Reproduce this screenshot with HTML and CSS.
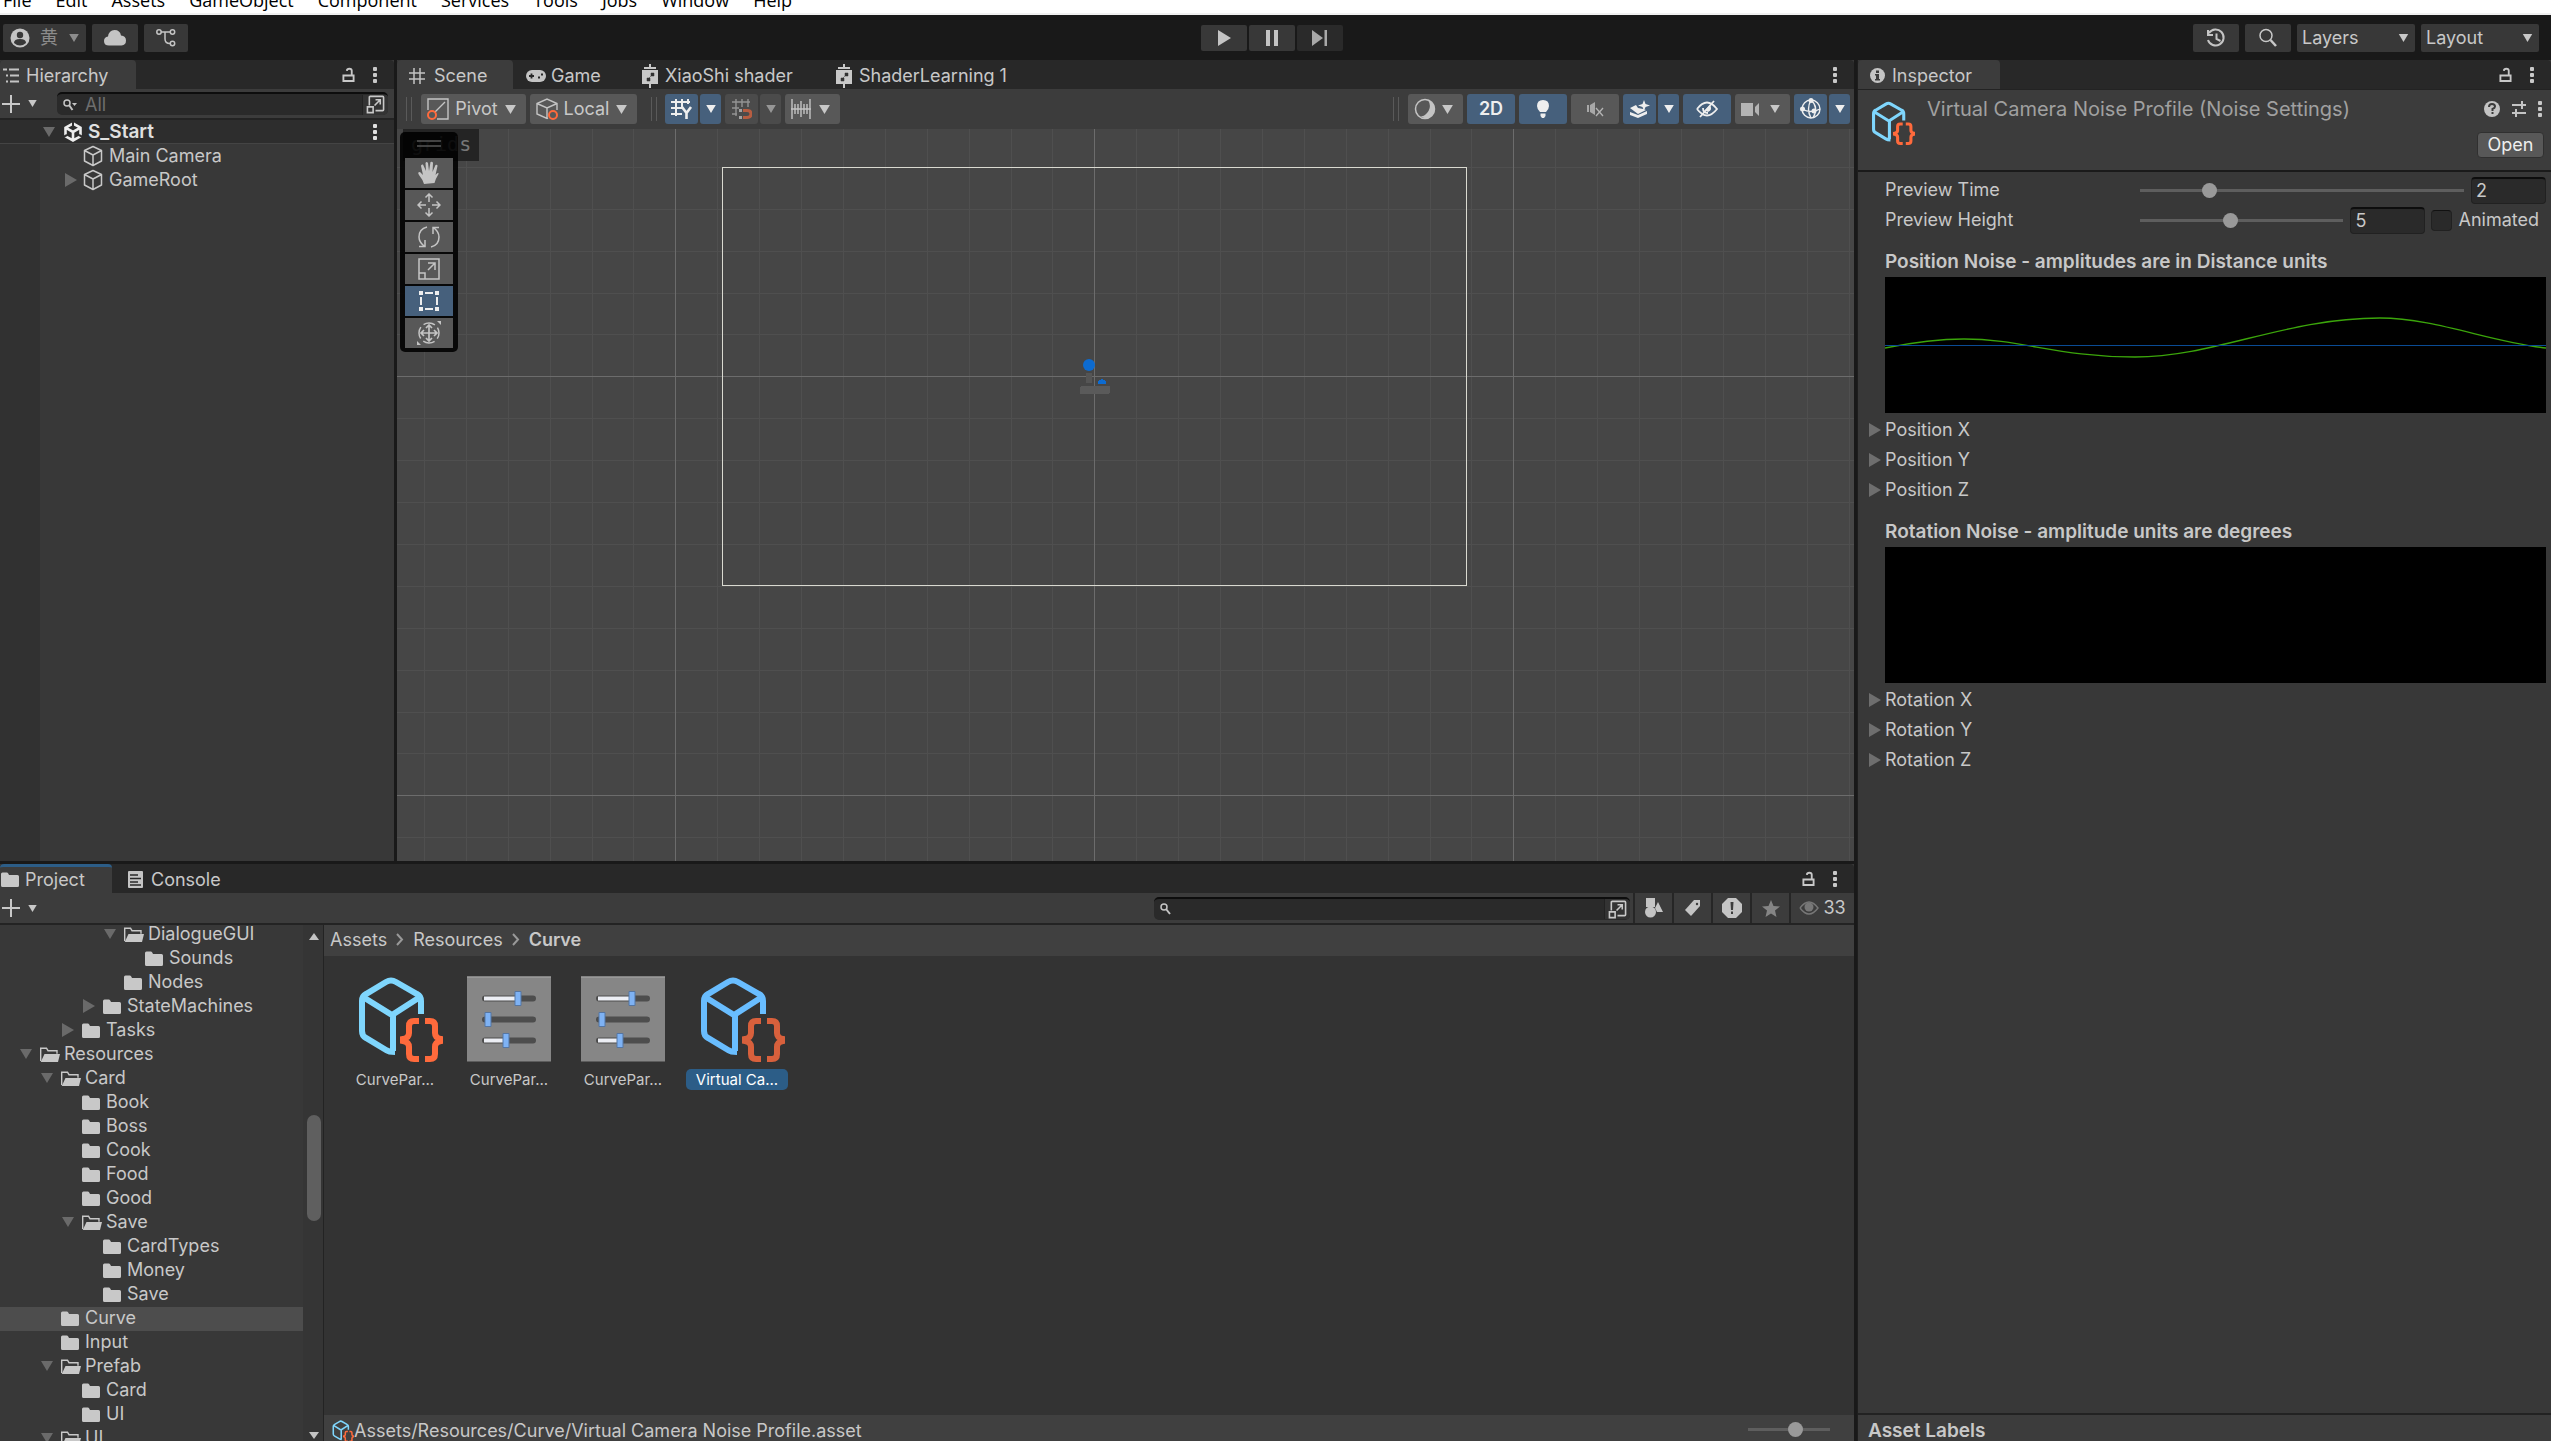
FILE: index.html
```html
<!DOCTYPE html>
<html lang="en">
<head>
<meta charset="utf-8">
<title>Scene Editor</title>
<link rel="stylesheet" href="styles.css">
</head>
<body>
<svg class="defs" aria-hidden="true">
  <symbol id="down" viewBox="0 0 14 10"><path d="M1 0h12L7 10z" fill="currentColor"/></symbol>
  <symbol id="right" viewBox="0 0 12 14"><path d="M0 0l12 7L0 14z" fill="currentColor"/></symbol>
  <symbol id="kebab" viewBox="0 0 4 16"><g fill="currentColor"><rect width="4" height="4" rx="1"/><rect y="6" width="4" height="4" rx="1"/><rect y="12" width="4" height="4" rx="1"/></g></symbol>
  <symbol id="lock" viewBox="0 0 14 16"><path d="M1.500 8.500h11v6h-11zM10.500 8V3.500C10.500 .6 5.500 .6 5.200 3.500" fill="none" stroke="currentColor" stroke-width="2"/></symbol>
  <symbol id="plus" viewBox="0 0 18 18"><path d="M9 0v18M0 9h18" stroke="currentColor" stroke-width="2"/></symbol>
  <symbol id="cube" viewBox="0 0 22 22"><path d="M11 1.500l8.500 4v10.500L11 20.500 2.500 16V5.500zM2.500 5.500L11 10l8.500-4.500M11 10v10.500" fill="none" stroke="currentColor" stroke-width="1.500" stroke-linejoin="round"/></symbol>
  <symbol id="folder" viewBox="0 0 20 16"><path d="M0 2q0-1.500 1.500-1.500H6q1 0 1.500 1.500l.5 1h8.500q1.500 0 1.500 1.500v9q0 1.500-1.500 1.500h-15Q0 15 0 13.500z" fill="currentColor"/></symbol>
  <symbol id="folder-open" viewBox="0 0 20 16"><path d="M.7 14V1.200H6.500l1.500 2.500h9v3" fill="none" stroke="currentColor" stroke-width="1.400"/><path d="M4.500 7H20l-2 8H.7z" fill="currentColor"/></symbol>
  <symbol id="popout" viewBox="0 0 20 20"><path d="M3.500 11V2.500q0-1 1-1h13q1 0 1 1v13q0 1-1 1H10M1.500 12.500h6v6h-6zM9 11l6-6M10 5h5v5" fill="none" stroke="currentColor" stroke-width="1.700"/></symbol>
  <symbol id="search" viewBox="0 0 20 20"><circle cx="8" cy="7.500" r="6" fill="none" stroke="currentColor" stroke-width="1.500"/><path d="M12.500 12l5.500 6" stroke="currentColor" stroke-width="2.500"/></symbol>
  <symbol id="handle" viewBox="0 0 8 24"><path d="M1.500 0v24M6.500 0v24" stroke="#5a5a5a"/></symbol>
  <symbol id="script" viewBox="0 0 16 24"><path d="M7 0h2v3h5v2H2V3h5zM0 6h16v14H9v4H7v-4H0z" fill="currentColor"/><path d="M6 15l5-5M9 9h3v3H9zM5 14h3v3H5z" fill="#333" stroke="#333" stroke-width=".5"/></symbol>
  <symbol id="asset" viewBox="0 0 86 86"><path d="M63 38V25q0-5-4-7L38 6q-5-3-10 0L8 18q-4 2-4 7v30q0 5 4 7l20 12q3 2 9 2M5 21l29 18 28-18M35 39v36" transform="translate(1 0)" fill="none" stroke="currentColor" stroke-width="6"/><path d="M62 45h-5q-5 0-5 5v7q0 5-6 6v2q6 1 6 6v7q0 5 5 5h5M68 45h5q5 0 5 5v7q0 5 6 6v2q-6 1-6 6v7q0 5-5 5h-5" fill="none" stroke="#ff6a3c" stroke-width="6" class="brace"/></symbol>
  <symbol id="preset" viewBox="0 0 84 85"><rect width="84" height="85" fill="#868686"/><path d="M0 .5h84" stroke="#aaa"/><path d="M18 22h48M18 43h48M18 64h48" stroke="#4d4d4d" stroke-width="6" stroke-linecap="round"/><path d="M17 22h32M17 64h20" stroke="#eceef4" stroke-width="4"/><path d="M48 15h6v14h-6zM18 36h6v14h-6zM36 57h6v14h-6z" fill="#7eb2f4" stroke="#5576a3"/></symbol>
</svg>

<nav class="menubar">
  <a href="#">File</a><a href="#">Edit</a><a href="#">Assets</a><a href="#">GameObject</a><a href="#">Component</a><a href="#">Services</a><a href="#">Tools</a><a href="#">Jobs</a><a href="#">Window</a><a href="#">Help</a>
</nav>

<header class="topbar">
  <div class="top-left">
    <button class="top-btn account"><svg width="20" height="20" viewBox="0 0 20 20"><circle cx="10" cy="10" r="9.500" fill="#c4c4c4"/><circle cx="10" cy="7" r="3.200" fill="#383838"/><path d="M4 15q0-4 6-4t6 4q-6 5-12 0" fill="#383838"/></svg><span>黄</span><svg width="12" height="8"><use href="#down"/></svg></button>
    <button class="top-btn cloud" aria-label="Cloud"><svg width="22" height="16" viewBox="0 0 22 16"><path d="M5 15.500q-5 0-5-4.500 0-4 4-4.500Q5 0 10.500 0 16 0 17 5.500q5 .5 5 5t-4.500 5z" fill="#c4c4c4"/></svg></button>
    <button class="top-btn vcs" aria-label="Version control"><svg width="20" height="18" viewBox="0 0 20 18"><g fill="none" stroke="#c4c4c4" stroke-width="1.500"><circle cx="3" cy="3" r="2.200"/><circle cx="16.500" cy="3" r="2.200"/><circle cx="16.500" cy="14.500" r="2.200"/><path d="M5 3h9M9 3v7q0 4.500 5 4.500"/></g></svg></button>
  </div>
  <div class="play">
    <button class="top-btn" aria-label="Play"><svg width="13" height="16" viewBox="0 0 13 16"><path d="M0 0l13 8-13 8z" fill="#c4c4c4"/></svg></button>
    <button class="top-btn" aria-label="Pause"><svg width="12" height="16" viewBox="0 0 12 16"><path d="M0 0h4v16H0zM8 0h4v16H8z" fill="#c4c4c4"/></svg></button>
    <button class="top-btn dim" aria-label="Step"><svg width="16" height="16" viewBox="0 0 16 16"><path d="M0 0l11 8-11 8zM12.500 0H15v16h-2.500z" fill="#a8a8a8"/></svg></button>
  </div>
  <div class="top-right">
    <button class="top-btn" aria-label="History"><svg width="20" height="20" viewBox="0 0 20 20"><path d="M3 5a8 8 0 1 1-1 7M2 2v5h5M10.500 5.500V11l4 2" fill="none" stroke="#c4c4c4" stroke-width="2"/></svg></button>
    <button class="top-btn" aria-label="Search"><svg width="20" height="20"><use href="#search"/></svg></button>
    <div class="pick"><select aria-label="Layers"><option>Layers</option></select><svg width="11" height="8"><use href="#down"/></svg></div>
    <div class="pick"><select aria-label="Layout"><option>Layout</option></select><svg width="11" height="8"><use href="#down"/></svg></div>
  </div>
</header>

<main class="workspace">
  <div class="left">
    <div class="upper">
      <section class="panel hierarchy">
        <div class="tabs">
          <button class="tab on"><svg width="16" height="16" viewBox="0 0 16 16"><path d="M0 1.500h4M6 1.500h10M3 7.500h2M7 7.500h9M3 13.500h2M7 13.500h9" stroke="#c4c4c4" stroke-width="1.800"/></svg>Hierarchy</button>
          <span class="tab-tools"><svg width="13" height="16"><use href="#lock"/></svg><svg width="4" height="16"><use href="#kebab"/></svg></span>
        </div>
        <div class="bar">
          <button class="add" aria-label="Create"><svg width="18" height="18"><use href="#plus"/></svg><svg width="11" height="7"><use href="#down"/></svg></button>
          <div class="find"><svg width="14" height="12" viewBox="0 0 14 12"><circle cx="4" cy="4" r="3" fill="none" stroke="#c4c4c4" stroke-width="1.500"/><path d="M6 6l3.500 5" stroke="#c4c4c4" stroke-width="2"/><path d="M9 4h5l-2.500 3z" fill="#c4c4c4"/></svg><input type="text" placeholder="All" aria-label="Search hierarchy"><button aria-label="Open search"><svg width="19" height="19"><use href="#popout"/></svg></button></div>
        </div>
        <ul class="objects">
          <li class="scene-row"><svg class="tri" width="14" height="12"><use href="#down"/></svg><svg width="20" height="20" viewBox="0 0 20 20"><path d="M10 1.500l7.500 4.200v8.600L10 18.500l-7.500-4.200V5.700zM2.500 5.700L10 10l7.500-4.300M10 10v8.500" fill="none" stroke="#eee" stroke-width="2.600"/><path d="M10 0v5M0 15l4-2M20 15l-4-2" stroke="#2d2d2d" stroke-width="2"/></svg><b>S_Start</b><svg class="end" width="4" height="16"><use href="#kebab"/></svg></li>
          <li class="obj"><svg class="tri off" width="12" height="14"><use href="#right"/></svg><svg width="22" height="22"><use href="#cube"/></svg>Main Camera</li>
          <li class="obj"><svg class="tri" width="12" height="14"><use href="#right"/></svg><svg width="22" height="22"><use href="#cube"/></svg>GameRoot</li>
        </ul>
      </section>

      <section class="panel scene">
        <div class="tabs">
          <button class="tab on t-scene"><svg width="16" height="16" viewBox="0 0 16 16"><path d="M5 0v16M11 0v16M0 5h16M0 11h16" stroke="#c4c4c4" stroke-width="1.500"/></svg>Scene</button>
          <button class="tab t-game"><svg width="20" height="12" viewBox="0 0 20 12"><rect width="20" height="12" rx="6" fill="#c4c4c4"/><path d="M3 6h5M5.500 3.500v5M12 7.500h2M15 4.500h2" stroke="#282828" stroke-width="1.800"/></svg>Game</button>
          <button class="tab t-shader"><svg width="16" height="24"><use href="#script"/></svg>XiaoShi shader</button>
          <button class="tab t-shader"><svg width="16" height="24"><use href="#script"/></svg>ShaderLearning 1</button>
          <span class="tab-tools"><svg width="4" height="16"><use href="#kebab"/></svg></span>
        </div>
        <div class="scene-bar">
          <svg class="grip" width="8" height="24"><use href="#handle"/></svg>
          <button class="tool w105"><svg width="22" height="22" viewBox="0 0 22 22"><path d="M1 12V1h20v20H10M8 14L18 4" fill="none" stroke="#c4c4c4" stroke-width="1.400"/><circle cx="5" cy="17" r="4" fill="none" stroke="#ff6a3c" stroke-width="2"/></svg>Pivot<svg width="13" height="9"><use href="#down"/></svg></button>
          <button class="tool w107"><svg width="22" height="22" viewBox="0 0 22 22"><path d="M12 20l-1 .5L1 16V5.500L11 1l10 4.500V12M1 5.500L11 10l10-4.500M11 10v10" fill="none" stroke="#c4c4c4" stroke-width="1.400"/><circle cx="17" cy="17" r="4" fill="none" stroke="#ff6a3c" stroke-width="2"/></svg>Local<svg width="13" height="9"><use href="#down"/></svg></button>
          <svg class="grip mid" width="8" height="24"><use href="#handle"/></svg>
          <div class="pair">
            <button class="tool blue w33" aria-label="Grid"><svg width="22" height="22" viewBox="0 0 22 22"><path d="M5 1v17M11 1v10M17 1v5M0 4h19M0 10h11M0 16h11" stroke="#eee" stroke-width="2" fill="none"/><path d="M11 9l4.500 6v6M20 9l-4.500 6" stroke="#eee" stroke-width="2.600" fill="none"/></svg></button>
            <button class="tool blue w21" aria-label="Grid options"><svg width="12" height="8"><use href="#down"/></svg></button>
          </div>
          <div class="pair faint">
            <button class="tool w33" aria-label="Snap"><svg width="20" height="20" viewBox="0 0 20 20"><path d="M4 0v17M10 0v8M16 0v8M0 3h18M0 9h7M0 15h5" stroke="#c4c4c4" stroke-width="1.400"/><path d="M11 11.500h4q4 0 4 3.500t-4 3.500h-4" fill="none" stroke="#ff6a3c" stroke-width="3"/><path d="M7 10h3v3H7zM7 17h3v3H7z" fill="#ddd"/></svg></button>
            <button class="tool w21" aria-label="Snap options"><svg width="12" height="8"><use href="#down"/></svg></button>
          </div>
          <button class="tool w55" aria-label="Increment"><svg width="20" height="20" viewBox="0 0 20 20"><path d="M1 0v20M19 0v20M0 10h20M4 5v10M7 5v10M10 2v16M13 5v10M16 5v10" stroke="#c4c4c4" stroke-width="1.400"/></svg><svg width="13" height="9"><use href="#down"/></svg></button>
          <span class="fill"></span>
          <svg class="grip right" width="8" height="24"><use href="#handle"/></svg>
          <button class="tool w55" aria-label="Draw mode"><svg width="22" height="22" viewBox="0 0 22 22"><circle cx="11" cy="11" r="9.500" fill="none" stroke="#c4c4c4" stroke-width="1.500"/><path d="M14 2q5 8-3 15-3 2-5 1 9 6 14-3 3-9-6-13" fill="#c4c4c4"/></svg><svg width="13" height="9"><use href="#down"/></svg></button>
          <button class="tool blue w48"><b>2D</b></button>
          <button class="tool blue w48" aria-label="Lighting"><svg width="12" height="18" viewBox="0 0 12 18"><path d="M3 12Q0 9 0 6q0-6 6-6t6 6q0 3-3 6zM3.500 13.500h5V16L7 18H5l-1.500-2z" fill="#eee"/></svg></button>
          <button class="tool w48" aria-label="Audio"><svg width="18" height="16" viewBox="0 0 18 16"><path d="M1 4h2v7H1zM4 4l5-3v13l-5-3z" fill="#a8a8a8"/><path d="M10 7l7 8M17 7l-7 8" stroke="#b4b4b4" stroke-width="1.300"/></svg></button>
          <div class="pair">
            <button class="tool blue w33" aria-label="Effects"><svg width="20" height="18" viewBox="0 0 20 18"><path d="M0 8l6-3 2 3 5 1 3 1-8 4zM0 12l8 3 9-4v3l-9 4-8-3zM14 0l1.500 4L20 5.500 15.500 7 14 11l-1.500-4L8 5.500 12.500 4z" fill="#eee"/></svg></button>
            <button class="tool blue w21" aria-label="Effect options"><svg width="12" height="8"><use href="#down"/></svg></button>
          </div>
          <button class="tool blue w48" aria-label="Visibility"><svg width="22" height="18" viewBox="0 0 22 18"><path d="M1 9q10-13 20 0-10 13-20 0M7 8q0 5 5 5M4 17L18 1" fill="none" stroke="#eee" stroke-width="1.800"/><path d="M9 10l5-5q3 5-2 7z" fill="#eee"/></svg></button>
          <button class="tool w55" aria-label="Camera"><svg width="19" height="13" viewBox="0 0 19 13"><path d="M0 0h12v13H0zM14 4l4-4v13l-4-4z" fill="#b4b4b4"/></svg><svg width="12" height="8"><use href="#down"/></svg></button>
          <div class="pair">
            <button class="tool blue w33" aria-label="Gizmos"><svg width="22" height="22" viewBox="0 0 22 22"><g fill="none" stroke="#eee" stroke-width="1.400"><circle cx="11" cy="11" r="9"/><path d="M11 2q-5 9 0 18M11 2q8 7 2 18M2 11q9 5 18 0"/></g><g fill="#eee"><circle cx="11" cy="2.500" r="2.500"/><circle cx="2.500" cy="11" r="2.500"/><circle cx="14" cy="13" r="2.500"/></g></svg></button>
            <button class="tool blue w21" aria-label="Gizmo options"><svg width="12" height="8"><use href="#down"/></svg></button>
          </div>
        </div>
        <div class="canvas">
          <svg class="grid" width="100%" height="100%">
            <defs><pattern id="cells" x="278" y="247" width="419" height="419" patternUnits="userSpaceOnUse">
              <path d="M42.500 0v419M84.500 0v419M126.500 0v419M168.500 0v419M210.500 0v419M252.500 0v419M294.500 0v419M336.500 0v419M377.500 0v419M0 42.500h419M0 84.500h419M0 126.500h419M0 168.500h419M0 210.500h419M0 252.500h419M0 294.500h419M0 336.500h419M0 377.500h419" stroke="#4f4f4f"/>
              <path d="M.5 0v419M0 .5h419" stroke="#6c6c6c"/>
            </pattern></defs>
            <rect width="100%" height="100%" fill="url(#cells)"/>
            <rect x="325.500" y="38.500" width="744" height="418" fill="none" stroke="#d9d9d0"/>
            <rect x="689" y="244" width="6" height="10" fill="#555"/>
            <rect x="683" y="257" width="30" height="8" rx="2" fill="#5a5a5a"/>
            <circle cx="692" cy="236" r="6" fill="#0d6bd0"/>
            <path d="M701 255v-2q4-6 8 0v2z" fill="#0d6bd0"/>
          </svg>
          <span class="hint">grids</span>
          <div class="overlay">
            <svg class="drag" width="24" height="7" viewBox="0 0 24 7"><path d="M0 1h24M0 6h24" stroke="#555" stroke-width="1.500"/></svg>
            <button aria-label="View"><svg width="22" height="24" viewBox="0 0 22 24"><path d="M6 23q-1-4-5-9-2-3 1-3l3 3L3 5q0-2 2-1.500L8 10 7.500 2q1-2 2.500 0l1 8 1.500-9q2-1 2.500 1l-.5 9 3-7q2-1 2 1l-2 9 2-2q2 0 1 1-3 5-4 9z" fill="#c4c4c4"/></svg></button>
            <button aria-label="Move"><svg width="24" height="24" viewBox="0 0 24 24"><path d="M12 1v8M12 15v8M1 12h8M15 12h8M8.500 4.500L12 1l3.500 3.500M8.500 19.500L12 23l3.500-3.500M4.500 8.500L1 12l3.500 3.500M19.500 8.500L23 12l-3.500 3.500" fill="none" stroke="#c4c4c4" stroke-width="1.500"/></svg></button>
            <button aria-label="Rotate"><svg width="22" height="22" viewBox="0 0 22 22"><path d="M9 1Q1 3 1 11q0 5 5 9M1 20.500h6V14M13 21q8-2 8-10 0-5-5-9M21 1.500h-6V8" fill="none" stroke="#c4c4c4" stroke-width="1.500"/></svg></button>
            <button aria-label="Scale"><svg width="22" height="22" viewBox="0 0 22 22"><path d="M1 1h20v20H1zM1 15h6v6M10 12l7-7M10 5h7v7" fill="none" stroke="#c4c4c4" stroke-width="1.500"/></svg></button>
            <button class="blue" aria-label="Rect"><svg width="20" height="20" viewBox="0 0 20 20"><path d="M0 0h4v4H0zM16 0h4v4h-4zM0 16h4v4H0zM16 16h4v4h-4zM6 1h8v2H6zM6 17h8v2H6zM1 6h2v8H1zM17 6h2v8h-2z" fill="#eee"/></svg></button>
            <button aria-label="Transform"><svg width="24" height="24" viewBox="0 0 24 24"><circle cx="12" cy="12" r="10" fill="none" stroke="#c4c4c4" stroke-width="1.500" stroke-dasharray="12 3.700" stroke-dashoffset="6"/><path d="M12 4v16M4 12h16M9 7l3-3 3 3M9 17l3 3 3-3M7 9l-3 3 3 3M17 9l3 3-3 3" fill="none" stroke="#c4c4c4" stroke-width="1.700"/><path d="M20 0h4v4zM0 20v4h4z" fill="#c4c4c4"/></svg></button>
          </div>
        </div>
      </section>
    </div>

    <section class="panel project">
      <div class="tabs">
        <button class="tab on focus"><svg width="20" height="16"><use href="#folder"/></svg>Project</button>
        <button class="tab t-console"><svg width="16" height="17" viewBox="0 0 16 17"><path d="M0 1q0-1 1-1h13q1 0 1 1v15q0 1-1 1H1q-1 0-1-1z" fill="#c4c4c4"/><path d="M2 4h8M2 7.500h11M2 11h8M2 14h11" stroke="#282828" stroke-width="1.500"/></svg>Console</button>
        <span class="tab-tools"><svg width="13" height="16"><use href="#lock"/></svg><svg width="4" height="16"><use href="#kebab"/></svg></span>
      </div>
      <div class="bar">
        <button class="add" aria-label="Create asset"><svg width="18" height="18"><use href="#plus"/></svg><svg width="11" height="7"><use href="#down"/></svg></button>
        <div class="find wide"><svg width="11" height="12" viewBox="0 0 11 12"><circle cx="4" cy="4" r="3" fill="none" stroke="#c4c4c4" stroke-width="1.500"/><path d="M6 6l4 5" stroke="#c4c4c4" stroke-width="2"/></svg><input type="text" aria-label="Search assets"><button aria-label="Open search"><svg width="19" height="19"><use href="#popout"/></svg></button></div>
        <div class="filters">
          <button aria-label="By type"><svg width="18" height="20" viewBox="0 0 18 20"><path d="M1 0h9v9H1zM13 4l5 10h-6l-2-4z" fill="#c4c4c4"/><circle cx="5.500" cy="14" r="5.500" fill="#c4c4c4"/></svg></button>
          <button aria-label="By label"><svg width="16" height="16" viewBox="0 0 16 16"><path d="M9 0h6v6L6 16l-6-6z" fill="#c4c4c4"/><circle cx="12" cy="4" r="1.200" fill="#3c3c3c"/></svg></button>
          <button aria-label="By log"><svg width="20" height="20" viewBox="0 0 20 20"><path d="M6 0h8l6 6v8l-6 6H6l-6-6V6z" fill="#c4c4c4"/><path d="M8.500 4h3l-.5 8H9zM9 13.500h2V16H9z" fill="#3c3c3c"/></svg></button>
          <button aria-label="Favorites"><svg width="18" height="17" viewBox="0 0 18 17"><path d="M9 0l2.500 6 6.500.5-5 4L14.500 17 9 13.500 3.500 17 5 10.500l-5-4L6.500 6z" fill="#858585"/></svg></button>
          <button class="hidden-count"><svg width="20" height="14" viewBox="0 0 20 14"><path d="M1 7q9-12 18 0-9 12-18 0" fill="none" stroke="#777" stroke-width="1.400"/><circle cx="10" cy="6" r="4.500" fill="#777"/></svg>33</button>
        </div>
      </div>
      <div class="browser">
        <ul class="tree">
          <li class="l5"><svg class="tri" width="14" height="12"><use href="#down"/></svg><svg width="20" height="16"><use href="#folder-open"/></svg>DialogueGUI</li>
          <li class="l6"><svg class="tri off" width="12" height="14"></svg><svg width="20" height="16"><use href="#folder"/></svg>Sounds</li>
          <li class="l5"><svg class="tri off" width="12" height="14"></svg><svg width="20" height="16"><use href="#folder"/></svg>Nodes</li>
          <li class="l4"><svg class="tri" width="12" height="14"><use href="#right"/></svg><svg width="20" height="16"><use href="#folder"/></svg>StateMachines</li>
          <li class="l3"><svg class="tri" width="12" height="14"><use href="#right"/></svg><svg width="20" height="16"><use href="#folder"/></svg>Tasks</li>
          <li class="l1"><svg class="tri" width="14" height="12"><use href="#down"/></svg><svg width="20" height="16"><use href="#folder-open"/></svg>Resources</li>
          <li class="l2"><svg class="tri" width="14" height="12"><use href="#down"/></svg><svg width="20" height="16"><use href="#folder-open"/></svg>Card</li>
          <li class="l3"><svg class="tri off" width="12" height="14"></svg><svg width="20" height="16"><use href="#folder"/></svg>Book</li>
          <li class="l3"><svg class="tri off" width="12" height="14"></svg><svg width="20" height="16"><use href="#folder"/></svg>Boss</li>
          <li class="l3"><svg class="tri off" width="12" height="14"></svg><svg width="20" height="16"><use href="#folder"/></svg>Cook</li>
          <li class="l3"><svg class="tri off" width="12" height="14"></svg><svg width="20" height="16"><use href="#folder"/></svg>Food</li>
          <li class="l3"><svg class="tri off" width="12" height="14"></svg><svg width="20" height="16"><use href="#folder"/></svg>Good</li>
          <li class="l3"><svg class="tri" width="14" height="12"><use href="#down"/></svg><svg width="20" height="16"><use href="#folder-open"/></svg>Save</li>
          <li class="l4"><svg class="tri off" width="12" height="14"></svg><svg width="20" height="16"><use href="#folder"/></svg>CardTypes</li>
          <li class="l4"><svg class="tri off" width="12" height="14"></svg><svg width="20" height="16"><use href="#folder"/></svg>Money</li>
          <li class="l4"><svg class="tri off" width="12" height="14"></svg><svg width="20" height="16"><use href="#folder"/></svg>Save</li>
          <li class="l2 sel"><svg class="tri off" width="12" height="14"></svg><svg width="20" height="16"><use href="#folder"/></svg>Curve</li>
          <li class="l2"><svg class="tri off" width="12" height="14"></svg><svg width="20" height="16"><use href="#folder"/></svg>Input</li>
          <li class="l2"><svg class="tri" width="14" height="12"><use href="#down"/></svg><svg width="20" height="16"><use href="#folder-open"/></svg>Prefab</li>
          <li class="l3"><svg class="tri off" width="12" height="14"></svg><svg width="20" height="16"><use href="#folder"/></svg>Card</li>
          <li class="l3"><svg class="tri off" width="12" height="14"></svg><svg width="20" height="16"><use href="#folder"/></svg>UI</li>
          <li class="l2"><svg class="tri" width="14" height="12"><use href="#down"/></svg><svg width="20" height="16"><use href="#folder-open"/></svg>UI</li>
        </ul>
        <div class="scroll">
          <svg width="10" height="7" viewBox="0 0 10 7"><path d="M0 7h10L5 0z" fill="#c4c4c4"/></svg>
          <div class="track"><div class="before"></div><div class="thumb"></div><div class="after"></div></div>
          <svg width="10" height="7" viewBox="0 0 10 7"><path d="M0 0h10L5 7z" fill="#c4c4c4"/></svg>
        </div>
        <div class="content">
          <nav class="crumbs"><a href="#">Assets</a><svg width="8" height="13" viewBox="0 0 8 13"><path d="M1 1l5 5.500L1 12" fill="none" stroke="#999" stroke-width="2"/></svg><a href="#">Resources</a><svg width="8" height="13" viewBox="0 0 8 13"><path d="M1 1l5 5.500L1 12" fill="none" stroke="#999" stroke-width="2"/></svg><b>Curve</b></nav>
          <div class="assets">
            <figure><svg class="cyan" width="86" height="86"><use href="#asset"/></svg><figcaption>CurvePar...</figcaption></figure>
            <figure><svg width="84" height="86"><use href="#preset"/></svg><figcaption>CurvePar...</figcaption></figure>
            <figure><svg width="84" height="86"><use href="#preset"/></svg><figcaption>CurvePar...</figcaption></figure>
            <figure class="sel"><svg class="cyan" width="86" height="86"><use href="#asset"/></svg><figcaption>Virtual Ca...</figcaption></figure>
          </div>
          <footer class="path"><svg class="cyan" width="22" height="22"><use href="#asset"/></svg><span>Assets/Resources/Curve/Virtual Camera Noise Profile.asset</span><input class="range zoom" type="range" min="0" max="100" value="59" aria-label="Icon size"></footer>
        </div>
      </div>
    </section>
  </div>

  <section class="panel inspector">
    <div class="tabs">
      <button class="tab on t-insp"><svg width="15" height="15" viewBox="0 0 15 15"><circle cx="7.500" cy="7.500" r="7.500" fill="#c4c4c4"/><path d="M6 2.500h3V5H6zM5 6h4v5h1v1.500H5V11h1V7.500H5z" fill="#3c3c3c"/></svg>Inspector</button>
      <span class="tab-tools"><svg width="13" height="16"><use href="#lock"/></svg><svg width="4" height="16"><use href="#kebab"/></svg></span>
    </div>
    <header class="head">
      <svg class="cyan" width="44" height="44"><use href="#asset"/></svg>
      <h1>Virtual Camera Noise Profile (Noise Settings)</h1>
      <div class="head-tools">
        <div class="glyphs"><svg width="16" height="16" viewBox="0 0 16 16"><circle cx="8" cy="8" r="8" fill="#c4c4c4"/><path d="M5 6q0-3 3-3t3 2.500Q11 7 8.500 8v2" fill="none" stroke="#3c3c3c" stroke-width="2"/><path d="M7.500 11h2v2h-2z" fill="#3c3c3c"/></svg><svg width="16" height="16" viewBox="0 0 16 16"><path d="M1 4h14M1 12h14M11 0v8M5 8v8" stroke="#c4c4c4" stroke-width="2"/></svg><svg width="4" height="16"><use href="#kebab"/></svg></div>
        <button class="open">Open</button>
      </div>
    </header>
    <div class="props">
      <div class="row"><label for="pt">Preview Time</label><input class="range" id="pt" type="range" min="0" max="100" value="20"><input class="num" type="text" value="2" aria-label="Preview Time value"></div>
      <div class="row"><label for="ph">Preview Height</label><input class="range" id="ph" type="range" min="0" max="100" value="44"><input class="num" type="text" value="5" aria-label="Preview Height value"><label class="check"><input type="checkbox">Animated</label></div>
      <h2>Position Noise - amplitudes are in Distance units</h2>
      <svg class="graph" viewBox="0 0 661 136" preserveAspectRatio="none"><path d="M0 71C25 66 50 62 79 62C135 62 175 80 250 80C330 80 400 41 495 41C550 41 605 65 661 71" fill="none" stroke="#3ba50b" stroke-width="1.300"/><path d="M0 68.500h661" stroke="#0a4b94"/></svg>
      <button class="fold"><svg width="12" height="14"><use href="#right"/></svg>Position X</button>
      <button class="fold"><svg width="12" height="14"><use href="#right"/></svg>Position Y</button>
      <button class="fold"><svg width="12" height="14"><use href="#right"/></svg>Position Z</button>
      <h2>Rotation Noise - amplitude units are degrees</h2>
      <svg class="graph"></svg>
      <button class="fold"><svg width="12" height="14"><use href="#right"/></svg>Rotation X</button>
      <button class="fold"><svg width="12" height="14"><use href="#right"/></svg>Rotation Y</button>
      <button class="fold"><svg width="12" height="14"><use href="#right"/></svg>Rotation Z</button>
    </div>
    <footer class="labels">Asset Labels</footer>
  </section>
</main>
</body>
</html>
```
FILE: styles.css
```css
* { box-sizing: border-box; }
body {
  margin: 0;
  height: 100vh;
  overflow: hidden;
  display: flex;
  flex-direction: column;
  background: #191919;
  color: #c8c8c8;
  font: 18px/24px Inter, "Noto Sans CJK SC", sans-serif;
}
button, input, select { font: inherit; color: inherit; border: 0; padding: 0; margin: 0; background: none; }
button { display: flex; align-items: center; white-space: nowrap; }
svg { flex: none; display: block; }
ul { list-style: none; margin: 0; padding: 0; }
a { color: inherit; text-decoration: none; }
b, h2 { font-weight: 600; }
.defs { position: absolute; width: 0; height: 0; }
.fill { flex: 1; }
.cyan { color: #7fd6fd; }

/* menu strip */
.menubar {
  flex: none;
  height: 15px;
  overflow: hidden;
  display: flex;
  align-items: flex-end;
  gap: 24px;
  padding: 0 3px 1px;
  background: #fff;
  border-bottom: 2px solid #f0f0f0;
  color: #000;
  font: 18px/24px "Open Sans", sans-serif;
}

/* main toolbar */
.topbar { flex: none; height: 45px; display: grid; grid-template-columns: 1fr auto 1fr; padding: 9px 12px 8px 3px; align-items: start; }
.top-btn { height: 28px; width: 46px; justify-content: center; background: #383838; border-radius: 2px; }
.top-left, .top-right { display: flex; gap: 6px; }
.top-right { justify-content: flex-end; }
.play { display: flex; gap: 2px; padding: 1px 0 0 2px; }
.play .top-btn { height: 26px; }
.play .dim { background: #2a2a2a; }
.account { width: 83px; justify-content: space-between; padding: 0 6px 0 7px; color: #8c8c8c; }
.vcs { width: 44px; }
.pick { display: grid; width: 118px; height: 28px; background: #383838; border-radius: 2px; align-items: center; }
.pick > * { grid-area: 1 / 1; }
.pick select { appearance: none; width: 100%; height: 28px; padding: 0 5px; }
.pick svg { justify-self: end; margin-right: 6px; pointer-events: none; }

/* panel frames */
.workspace { flex: 1; min-height: 0; display: flex; gap: 3px; }
.left { flex: 1; min-width: 0; display: grid; grid-template-rows: minmax(0, 801fr) minmax(0, 577fr); gap: 3px; }
.upper { display: flex; gap: 3px; min-height: 0; }
.panel { display: flex; flex-direction: column; min-width: 0; min-height: 0; background: #383838; overflow: hidden; }
.hierarchy { width: 394px; }
.scene { flex: 1; }
.inspector { width: 694px; border-left: 1px solid #1e1e1e; }
.tabs { flex: none; display: flex; height: 29px; background: #282828; border-radius: 4px 4px 0 0; }
.tab { padding: 2px 12px 0; gap: 8px; border-radius: 4px 4px 0 0; }
.tab.on { background: #3c3c3c; }
.hierarchy .tab { width: 136px; padding: 2px 0 0 3px; gap: 7px; }
.t-scene { width: 116px; gap: 9px; }
.t-game { width: 116px; padding: 2px 13px 0; gap: 5px; }
.t-shader { width: 194px; padding: 2px 13px 0; gap: 7px; }
.tab-tools { margin-left: auto; display: flex; align-items: center; gap: 18px; padding-right: 17px; }

.bar { flex: none; height: 31px; display: flex; align-items: center; background: #3c3c3c; border-bottom: 2px solid #232323; }
.add { gap: 7px; padding-left: 2px; }
.find { display: flex; align-items: center; height: 23px; flex: 1; min-width: 0; margin: 0 6px 0 19px; padding-left: 6px; gap: 8px; overflow: hidden; background: #2a2a2a; border-radius: 5px; border-top: 2px solid #0d0d0d; }
.find input { flex: 1; min-width: 0; height: 20px; outline: 0; }
.find input::placeholder { color: #6e6e6e; opacity: 1; }
.find button { flex: none; width: 26px; height: 20px; justify-content: center; background: #333; border-left: 1px solid #222; }

/* hierarchy */
.objects { flex: 1; background: linear-gradient(to right, #313131 40px, #383838 40px); }
.objects li { display: flex; align-items: center; height: 24px; }
.scene-row { background: #2d2d2d; border-bottom: 1px solid #444; padding-left: 42px; color: #e0e0e0; }
.scene-row b { margin-left: 5px; font-size: 19px; }
.scene-row .tri { margin-right: 7px; }
.end { margin-left: auto; margin-right: 17px; }
.obj { padding-left: 65px; }
.obj .tri { margin-right: 5px; }
.obj svg + svg { margin-right: 5px; }
.tri { color: #6a6a6a; }
.off { visibility: hidden; }

/* scene toolbar */
.scene-bar { flex: none; display: flex; align-items: center; gap: 4px; height: 40px; padding: 0 4px 0 8px; background: #3c3c3c; }
.grip { margin-right: 4px; }
.mid { margin: 0 3px 0 9px; }
.right { margin-right: 4px; }
.pair { display: flex; gap: 2px; }
.tool { height: 30px; justify-content: space-between; padding: 0 9px 0 6px; background: #585858; border-radius: 3px; }
.w21, .w33, .w48 { justify-content: center; padding: 0; }
.w21 { width: 21px; }
.w33 { width: 33px; }
.w48 { width: 48px; }
.w55 { width: 55px; }
.w105 { width: 105px; }
.w107 { width: 107px; }
.blue { background: #46607c; color: #eee; }
.faint .tool { background: #4b4b4b; }
.faint svg { opacity: .6; }

/* scene view */
.canvas { position: relative; flex: 1; background: #464646; }
.grid { position: absolute; inset: 0; shape-rendering: crispEdges; }
.grid circle { shape-rendering: auto; }
.hint { position: absolute; left: 6px; top: 0; padding: 3px 8px; height: 32px; background: #242424; color: #777; font: 20px/24px "DejaVu Sans Mono", monospace; }
.overlay { position: absolute; left: 3px; top: 3px; width: 58px; padding: 8px 5px 4px; display: flex; flex-direction: column; gap: 2px; background: rgba(0, 0, 0, .88); border-radius: 5px; }
.overlay button { height: 30px; justify-content: center; background: #585858; }
.overlay .blue { background: #46607c; }
.drag { align-self: center; margin-bottom: 9px; }

/* project */
.project .tab { width: 112px; padding: 0 0 0 1px; gap: 4px; }
.project .t-console { width: auto; padding: 2px 16px 0; gap: 7px; }
.focus { border-top: 3px solid #2c5d87; }
.project .bar { height: 32px; }
.project .add { margin-right: auto; }
.wide { flex: none; width: 476px; margin: 0 3px 0 0; }
.filters { display: flex; gap: 2px; height: 30px; background: #262626; padding-left: 2px; }
.filters button { width: 37px; justify-content: center; background: #3c3c3c; }
.filters .hidden-count { width: 63px; gap: 4px; }
.browser { flex: 1; min-height: 0; display: flex; }
.tree { width: 303px; overflow: hidden; }
.tree li { display: flex; align-items: center; height: 24px; padding-bottom: 2px; }
.tree li:first-child { height: 22px; padding-bottom: 4px; }
.tree .tri { width: 14px; margin-right: 7px; }
.tree svg + svg { margin-right: 4px; position: relative; top: 1px; }
.tree .sel { background: #4d4d4d; }
.l1 { padding-left: 19px; }
.l2 { padding-left: 40px; }
.l3 { padding-left: 61px; }
.l4 { padding-left: 82px; }
.l5 { padding-left: 103px; }
.l6 { padding-left: 124px; }
.scroll { width: 21px; display: flex; flex-direction: column; align-items: center; gap: 4px; padding: 8px 0 2px 2px; background: #353535; border-right: 1px solid #232323; }
.track { flex: 1; display: flex; flex-direction: column; }
.thumb { width: 14px; flex: 106; background: #5f5f5f; border-radius: 7px; }
.before { flex: 172; }
.after { flex: 208; }
.content { flex: 1; min-width: 0; display: flex; flex-direction: column; background: #333; }
.crumbs { display: flex; align-items: center; gap: 9px; height: 31px; padding: 0 6px 2px; background: #404040; }
.assets { flex: 1; display: flex; align-items: flex-start; gap: 12px; padding: 20px; }
figure { margin: 0; width: 102px; display: flex; flex-direction: column; align-items: center; gap: 7px; }
figure .cyan { margin-left: 10px; }
figcaption { width: 100%; text-align: center; font-size: 15px; line-height: 21px; border-radius: 5px; }
figure.sel .cyan { color: #69bdff; --brace: #d8603c; }
.brace { stroke: var(--brace, #ff6a3c); }
.sel figcaption { background: #2c5d87; color: #fff; }
.path { display: flex; align-items: center; height: 26px; padding: 6px 24px 0 8px; background: #404040; }
.path .zoom { width: 82px; margin-left: auto; margin-bottom: 3px; }

/* sliders */
.range { appearance: none; height: 16px; min-width: 0; outline: 0; background: linear-gradient(#5e5e5e, #5e5e5e) center / 100% 3px no-repeat; }
.range::-webkit-slider-thumb { appearance: none; width: 15px; height: 15px; border-radius: 50%; background: #999; }

/* inspector */
.head { flex: none; display: flex; align-items: flex-start; height: 83px; padding: 11px 7px 0 13px; background: #3c3c3c; border-top: 1px solid #232323; border-bottom: 2px solid #1a1a1a; }
.head h1 { margin: -4px 0 0 12px; flex: 1; font-size: 20px; font-weight: 400; color: #a0a0a0; }
.head-tools { display: flex; flex-direction: column; align-items: flex-end; gap: 15px; }
.glyphs { display: flex; gap: 11px; padding-right: 2px; }
.t-insp { width: 142px; gap: 7px; }
.open { width: 67px; height: 26px; justify-content: center; background: #585858; border-radius: 4px; border: 1px solid #303030; color: #eee; }
.props { flex: 1; padding: 3px 5px 0 27px; }
.row { display: flex; align-items: center; height: 30px; }
.row > label:first-child { width: 255px; }
.row .range { flex: 1; }
.num { width: 75px; height: 27px; margin-left: 7px; padding: 0 4px; background: #2a2a2a; border: 1px solid #212121; border-top: 2px solid #0d0d0d; border-radius: 4px; }
.check { display: flex; align-items: center; gap: 6px; margin: 0 7px 0 6px; }
.check input { appearance: none; width: 21px; height: 21px; background: #2a2a2a; border: 1px solid #212121; border-top-color: #111; border-radius: 4px; }
.props h2 { margin: 15px 0 3px; font-size: 19px; line-height: 24px; }
.graph { width: 100%; height: 136px; margin-bottom: 2px; background: #000; }
.fold { height: 30px; gap: 4px; margin-left: -16px; }
.fold svg { color: #6e6e6e; }
.labels { height: 28px; padding: 4px 10px 0; background: #3c3c3c; border-top: 2px solid #222; font-size: 19px; font-weight: 600; line-height: 24px; }
```
